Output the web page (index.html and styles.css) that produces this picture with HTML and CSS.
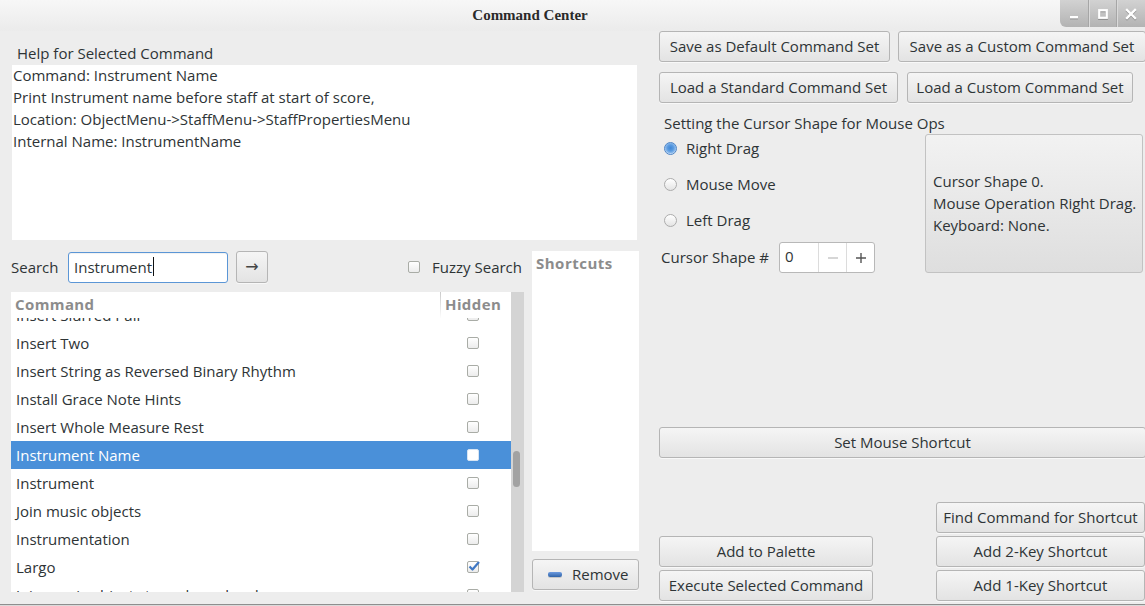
FILE: index.html
```html
<!DOCTYPE html>
<html>
<head>
<meta charset="utf-8">
<title>Command Center</title>
<link rel="stylesheet" href="styles.css">
</head>
<body>
<div class="window">
  <header class="titlebar">
    <span class="title">Command Center</span>
    <div class="wm-controls">
      <span class="wm-btn"><svg width="12" height="12" viewBox="0 0 12 12"><rect x="2" y="8" width="8" height="2.4" fill="#fff"/></svg></span>
      <span class="wm-btn"><svg width="12" height="12" viewBox="0 0 12 12"><rect x="2.2" y="2.2" width="7.6" height="7.6" fill="none" stroke="#fff" stroke-width="2.2"/></svg></span>
      <span class="wm-btn"><svg width="12" height="12" viewBox="0 0 12 12"><path d="M2 2 L10 10 M10 2 L2 10" stroke="#fff" stroke-width="2.3" stroke-linecap="square"/></svg></span>
    </div>
  </header>

  <main class="content">
    <section class="left">
      <div class="help-label">Help for Selected Command</div>
      <div class="help-box">
        <div class="help-lines">
          <div>Command: Instrument Name</div>
          <div>Print Instrument name before staff at start of score,</div>
          <div>Location: ObjectMenu-&gt;StaffMenu-&gt;StaffPropertiesMenu</div>
          <div>Internal Name: InstrumentName</div>
        </div>
      </div>

      <div class="lower">
        <div class="cmd-area">
          <div class="search-row">
            <span class="search-label">Search</span>
            <div class="search-input"><span class="search-text">Instrument</span><span class="caret"></span></div>
            <button class="btn arrow-btn">→</button>
            <label class="fuzzy"><span class="check"></span><span>Fuzzy Search</span></label>
          </div>

          <div class="list">
            <div class="list-main">
              <div class="list-head">
                <div class="col-cmd">Command</div>
                <div class="col-hidden">Hidden</div>
              </div>
              <div class="list-body">
                <div class="row first"><span class="name">Insert Slurred Pair</span><span class="hid"><span class="check"></span></span></div>
                <div class="row"><span class="name">Insert Two</span><span class="hid"><span class="check"></span></span></div>
                <div class="row"><span class="name">Insert String as Reversed Binary Rhythm</span><span class="hid"><span class="check"></span></span></div>
                <div class="row"><span class="name">Install Grace Note Hints</span><span class="hid"><span class="check"></span></span></div>
                <div class="row"><span class="name">Insert Whole Measure Rest</span><span class="hid"><span class="check"></span></span></div>
                <div class="row selected"><span class="name">Instrument Name</span><span class="hid"><span class="check"></span></span></div>
                <div class="row"><span class="name">Instrument</span><span class="hid"><span class="check"></span></span></div>
                <div class="row"><span class="name">Join music objects</span><span class="hid"><span class="check"></span></span></div>
                <div class="row"><span class="name">Instrumentation</span><span class="hid"><span class="check"></span></span></div>
                <div class="row"><span class="name">Largo</span><span class="hid"><span class="check checked"><svg width="14" height="12" viewBox="0 0 14 12"><path d="M2.5 6.5 L5.5 9.5 L12 2" fill="none" stroke="#3f78c4" stroke-width="2.2" stroke-linejoin="round"/></svg></span></span></div>
                <div class="row"><span class="name">Join music objects to make a chord</span><span class="hid"><span class="check"></span></span></div>
              </div>
            </div>
            <div class="scroll-trough"><div class="scroll-thumb"></div></div>
          </div>
        </div>

        <div class="shortcuts-area">
          <div class="shortcuts-panel">Shortcuts</div>
          <button class="btn remove-btn"><span class="remove-icon"></span><span>Remove</span></button>
        </div>
      </div>
    </section>

    <section class="right">
      <div class="btn-row">
        <button class="btn w-save-def">Save as Default Command Set</button>
        <button class="btn w-save-cust">Save as a Custom Command Set</button>
      </div>
      <div class="btn-row row2">
        <button class="btn w-load-std">Load a Standard Command Set</button>
        <button class="btn w-load-cust">Load a Custom Command Set</button>
      </div>

      <div class="cursor-title">Setting the Cursor Shape for Mouse Ops</div>
      <div class="cursor-body">
        <div class="cursor-left">
          <div class="radio-row"><span class="radio on"></span><span>Right Drag</span></div>
          <div class="radio-row"><span class="radio"></span><span>Mouse Move</span></div>
          <div class="radio-row"><span class="radio"></span><span>Left Drag</span></div>
          <div class="spin-row">
            <span class="spin-label">Cursor Shape #</span>
            <div class="spin">
              <span class="spin-entry">0</span>
              <span class="spin-btn"><svg width="12" height="12" viewBox="0 0 12 12"><path d="M1 6 H11" stroke="#c4c4c4" stroke-width="1.4"/></svg></span>
              <span class="spin-btn"><svg width="12" height="12" viewBox="0 0 12 12"><path d="M1 6 H11 M6 1 V11" stroke="#555" stroke-width="1.4"/></svg></span>
            </div>
          </div>
        </div>
        <div class="info-box">
          <div>Cursor Shape 0.</div>
          <div>Mouse Operation Right Drag.</div>
          <div>Keyboard: None.</div>
        </div>
      </div>

      <button class="btn set-mouse">Set Mouse Shortcut</button>

      <div class="bottom-grid">
        <button class="btn g-find">Find Command for Shortcut</button>
        <button class="btn g-palette">Add to Palette</button>
        <button class="btn g-two">Add 2-Key Shortcut</button>
        <button class="btn g-exec">Execute Selected Command</button>
        <button class="btn g-one">Add 1-Key Shortcut</button>
      </div>
    </section>
  </main>
  <div class="window-bottom"></div>
</div>
</body>
</html>
```
FILE: styles.css
```css
* { box-sizing: border-box; }
html, body { margin: 0; padding: 0; }
body {
  width: 1145px;
  height: 606px;
  overflow: hidden;
  background: #ededed;
  font-family: "Open Sans", "DejaVu Sans", sans-serif;
  font-size: 15px;
  color: #2e3436;
}
.window { display: flex; flex-direction: column; height: 606px; }

/* title bar */
.titlebar {
  height: 31px;
  flex-shrink: 0;
  display: flex;
  align-items: flex-start;
  background: linear-gradient(#f7f7f7, #ebebeb);
}
.title {
  flex: 1;
  text-align: center;
  line-height: 31px;
  font-family: "Liberation Serif", serif;
  font-weight: bold;
  font-size: 15px;
  color: #2a2a2a;
}
.wm-controls {
  display: flex;
  width: 85px;
  height: 27px;
  border-radius: 0 0 0 6px;
  background: linear-gradient(#d2d2d2, #b3b3b3);
  overflow: hidden;
}
.wm-btn {
  flex: 1;
  display: flex;
  align-items: center;
  justify-content: center;
  border-left: 1px solid #a6a6a6;
  box-shadow: inset 1px 0 0 #dadada;
}
.wm-btn:first-child { border-left: none; box-shadow: none; }
.wm-btn svg { filter: drop-shadow(0 1px 0 rgba(0,0,0,0.25)); }

/* main */
.content { display: flex; height: 573px; flex-shrink: 0; }
.window-bottom { height: 2px; border-top: 1px solid #8e8e8e; background: #dadada; }

.left { width: 640px; flex-shrink: 0; }
.help-label { margin: 13px 0 0 17px; line-height: 18px; height: 18px; }
.help-box {
  margin: 3px 0 0 12px;
  width: 625px;
  height: 175px;
  background: #fff;
  padding-left: 1px;
  line-height: 22px;
  overflow: hidden;
}
.help-lines { margin-top: -1px; }

.lower { display: flex; margin: 11px 0 0 11px; }
.cmd-area { width: 513px; display: flex; flex-direction: column; }
.search-row { display: flex; align-items: center; height: 32px; }
.search-label { width: 57px; padding-bottom: 1px; }
.search-input {
  width: 160px;
  height: 31px;
  border: 1px solid #5b96d6;
  border-radius: 3px;
  background: #fff;
  padding-left: 5px;
  padding-bottom: 1px;
  display: flex;
  align-items: center;
  box-shadow: inset 0 1px 1px rgba(0,0,0,0.06);
}
.caret { display: inline-block; width: 1px; height: 19px; background: #111; margin-left: 1px; }

.btn {
  font-family: inherit;
  font-size: 15px;
  color: #2e3436;
  height: 31px;
  border: 1px solid #b5b5b5;
  border-radius: 3px;
  background: linear-gradient(#f5f5f5, #e3e3e3);
  box-shadow: 0 1px 0 rgba(255,255,255,0.6);
  padding: 0 0 2px 0;
  margin: 0;
  display: flex;
  align-items: center;
  justify-content: center;
  white-space: nowrap;
}
.arrow-btn { width: 32px; height: 32px; margin-left: 8px; font-size: 16px; color: #444; }

.fuzzy { margin-left: auto; display: flex; align-items: center; padding-right: 2px; padding-bottom: 1px; }
.fuzzy .check { margin-right: 12px; }

.check {
  display: inline-block;
  width: 12px;
  height: 12px;
  border: 1px solid #a9aca6;
  border-radius: 2px;
  background: linear-gradient(#ffffff, #ececec);
  position: relative;
}
.check.checked svg { position: absolute; left: -1px; top: -2px; }

.list { margin-top: 9px; height: 300px; display: flex; background: #fff; }
.list-main { width: 500px; display: flex; flex-direction: column; overflow: hidden; }
.list-head { height: 26px; display: flex; flex-shrink: 0; background: #fff; font-weight: bold; color: #8c8c8c; letter-spacing: 0.4px; }
.col-cmd { width: 429px; padding-left: 4px; line-height: 25px; }
.col-hidden {
  width: 71px;
  padding-left: 4px;
  line-height: 25px;
  border-left: 1px solid;
  border-image: linear-gradient(#c8c8c8, rgba(200,200,200,0)) 1;
}
.list-body { flex: 1; overflow: hidden; }
.row { height: 28px; display: flex; align-items: center; padding-bottom: 1px; }
.row.first { margin-top: -17px; }
.row .name { width: 429px; padding-left: 5px; white-space: nowrap; overflow: hidden; }
.row .hid { width: 71px; padding-left: 27px; display: flex; align-items: center; }
.row.selected { background: #4a90d9; color: #fff; }
.row.selected .check { background: #fff; border-color: #d6e4f3; }

.scroll-trough { width: 13px; background: #d4d4d4; padding-top: 159px; padding-left: 2px; }
.scroll-thumb { width: 7px; height: 36px; border-radius: 4px; background: #a2a2a2; }

.shortcuts-area { margin-left: 8px; width: 107px; display: flex; flex-direction: column; }
.shortcuts-panel {
  height: 300px;
  background: #fff;
  padding: 2px 0 0 4px;
  line-height: 20px;
  font-weight: bold;
  color: #8c8c8c;
  letter-spacing: 0.5px;
}
.remove-btn { margin-top: 8px; width: 107px; justify-content: flex-start; padding-left: 15px; }
.remove-icon {
  display: inline-block;
  width: 14px;
  height: 5px;
  border-radius: 2px;
  background: linear-gradient(#6d9be0, #2f63a8);
  box-shadow: 0 1px 0 rgba(0,0,0,0.15);
  margin-right: 10px;
  margin-top: 2px;
}

/* right side */
.right { flex: 1; padding-left: 19px; display: flex; flex-direction: column; }
.btn-row { display: flex; gap: 8px; }
.btn-row.row2 { margin-top: 10px; gap: 9px; }
.w-save-def { width: 231px; }
.w-save-cust { width: 248px; flex-shrink: 0; }
.w-load-std { width: 239px; }
.w-load-cust { width: 226px; }

.cursor-title { margin-top: 10px; padding-top: 1px; line-height: 18px; height: 19px; padding-left: 5px; }
.cursor-body { display: flex; }
.cursor-left { display: flex; flex-direction: column; }
.radio-row { height: 32px; margin-bottom: 4px; display: flex; align-items: center; padding-left: 5px; }
.radio-row:nth-child(3) { margin-bottom: 0; }
.radio-row span:last-child { margin-top: -1px; }
.radio {
  display: inline-block;
  width: 13px;
  height: 13px;
  border-radius: 50%;
  border: 1px solid #acacac;
  background: linear-gradient(#ffffff, #e4e4e4);
  margin-right: 9px;
}
.radio.on {
  border-color: #4d84c6;
  background: radial-gradient(circle at 50% 45%, #3f86d6 0, #5a9be0 3px, #8ab9ec 5px, #d7e7f8 6px);
}
.spin-row { margin-top: 6px; display: flex; align-items: center; height: 31px; padding-left: 2px; }
.spin-label { width: 118px; padding-bottom: 2px; }
.spin {
  display: flex;
  width: 96px;
  height: 31px;
  border: 1px solid #b8b8b8;
  border-radius: 3px;
  background: #fff;
}
.spin-entry { width: 38px; padding-left: 5px; line-height: 27px; }
.spin-btn { width: 28px; display: flex; align-items: center; justify-content: center; border-left: 1px solid #dcdcdc; }

.info-box {
  margin-left: auto;
  margin-right: 3px;
  margin-top: 2px;
  width: 218px;
  height: 139px;
  border: 1px solid #c2c2c2;
  border-radius: 3px;
  background: linear-gradient(#f2f2f2, #dedede);
  padding: 0 0 2px 7px;
  display: flex;
  flex-direction: column;
  justify-content: center;
  line-height: 22px;
}

.set-mouse { margin-top: 154px; width: 487px; flex-shrink: 0; }

.bottom-grid {
  margin-top: 44px;
  display: grid;
  grid-template-columns: 214px 209px;
  grid-template-rows: 31px 31px 31px;
  column-gap: 63px;
  row-gap: 3px;
}
.g-find { grid-column: 2; grid-row: 1; }
.g-palette { grid-column: 1; grid-row: 2; }
.g-two { grid-column: 2; grid-row: 2; }
.g-exec { grid-column: 1; grid-row: 3; }
.g-one { grid-column: 2; grid-row: 3; }
```
